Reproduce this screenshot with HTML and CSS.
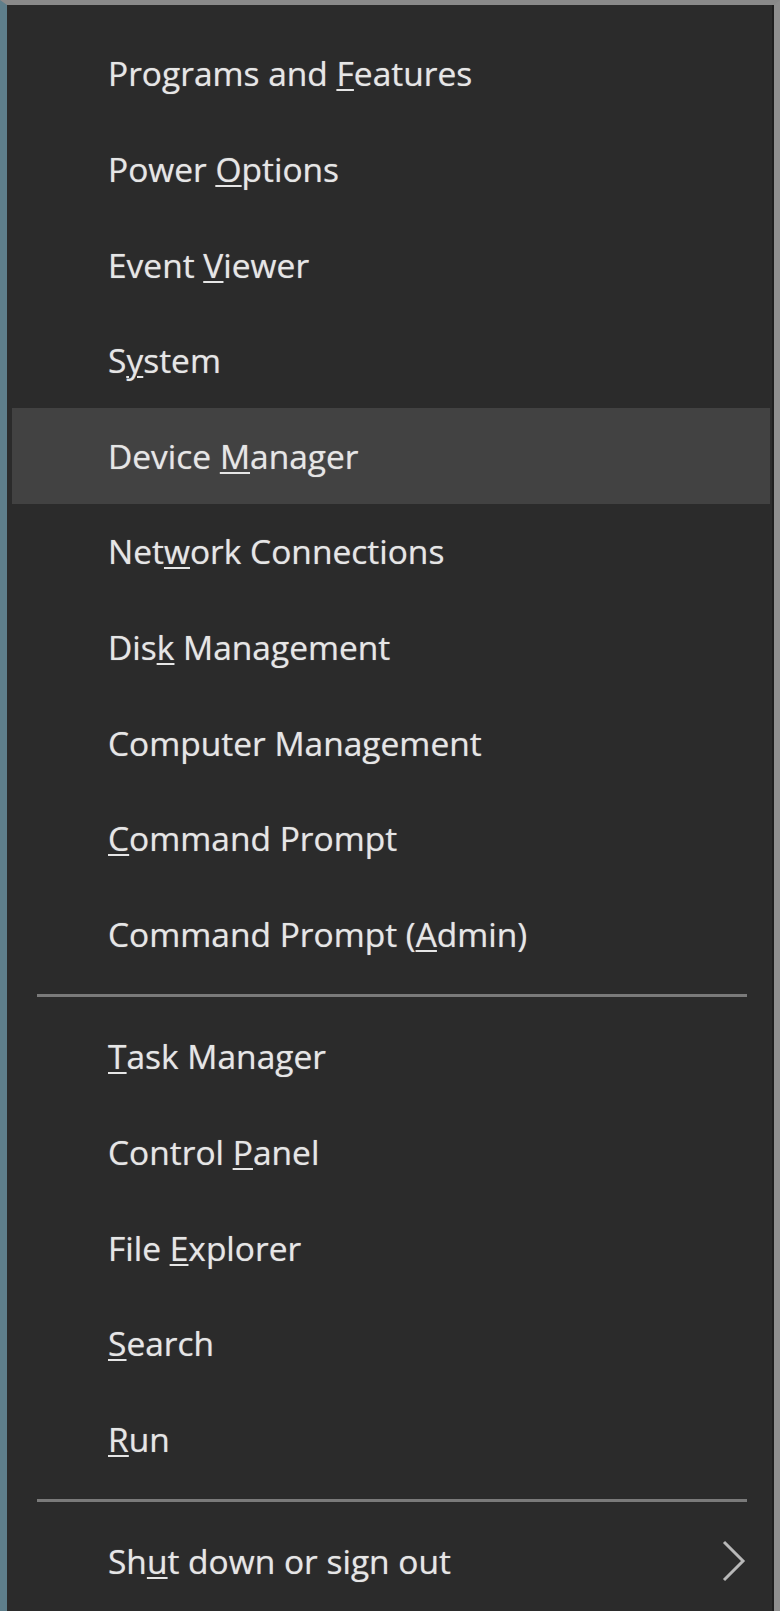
FILE: index.html
```html
<!DOCTYPE html>
<html lang="en">
<head>
  <meta charset="UTF-8">
  <meta name="viewport" content="width=device-width, initial-scale=1.0">
  <title>Quick Link Menu</title>
  <link rel="stylesheet" href="styles.css">
</head>
<body>
  <div class="menu">
    <ul class="group">
      <li class="item"><span>Programs and <u>F</u>eatures</span></li>
      <li class="item"><span>Power <u>O</u>ptions</span></li>
      <li class="item"><span>Event <u>V</u>iewer</span></li>
      <li class="item"><span>S<u>y</u>stem</span></li>
      <li class="item active"><span>Device <u>M</u>anager</span></li>
      <li class="item"><span>Net<u>w</u>ork Connections</span></li>
      <li class="item"><span>Dis<u>k</u> Management</span></li>
      <li class="item"><span>Computer Mana<u>g</u>ement</span></li>
      <li class="item"><span><u>C</u>ommand Prompt</span></li>
      <li class="item"><span>Command Prompt (<u>A</u>dmin)</span></li>
    </ul>

    <hr class="divider">

    <ul class="group">
      <li class="item"><span><u>T</u>ask Manager</span></li>
      <li class="item"><span>Control <u>P</u>anel</span></li>
      <li class="item"><span>File <u>E</u>xplorer</span></li>
      <li class="item"><span><u>S</u>earch</span></li>
      <li class="item"><span><u>R</u>un</span></li>
    </ul>

    <hr class="divider">

    <ul class="group">
      <li class="item submenu">
        <span>Sh<u>u</u>t down or sign out</span>
        <svg class="chevron" width="26" height="42" viewBox="0 0 26 42">
          <polyline points="3,2 22,21 3,40" fill="none" stroke="#b8b8b8" stroke-width="3"/>
        </svg>
      </li>
    </ul>
  </div>
</body>
</html>
```

FILE: styles.css
```css
body { margin: 0; background: #2b2b2b; }
.menu { width: 780px; height: 1611px; box-sizing: border-box; padding-top: 20.6px; background: #2b2b2b; border-left: 7px solid #5e7e8b; border-top: 5px solid #8a8a8a; border-right: 6px solid #8e8e8e; box-shadow: inset -2px 0 0 #1e1e1e; font-family: "Open Sans", "Noto Sans", sans-serif; }
.group { list-style: none; margin: 0 4px 0 5px; padding: 0; }
.item { display: flex; align-items: center; height: 95.6px; padding-left: 96px; font-size: 33.5px; color: #e6e6e6; text-shadow: 0 0 1px rgba(230,230,230,0.6); }
.item u { text-decoration-thickness: 2px; text-underline-offset: 3px; }
.item.active { background: #424242; }
.submenu { justify-content: space-between; padding-right: 23px; }
.chevron { display: block; }
.divider { height: 3px; margin: 12px 27px 12px 30px; border: none; background: #7a7a7a; }
```
